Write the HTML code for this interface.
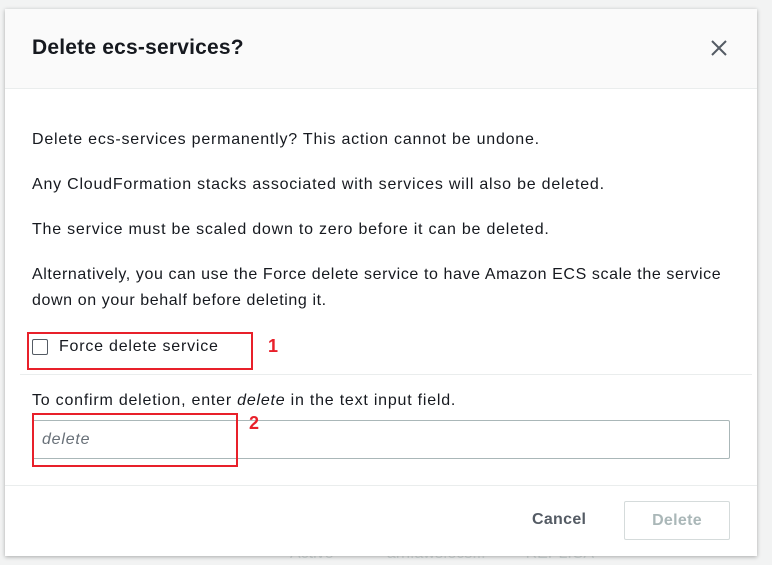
<!DOCTYPE html>
<html><head><style>
body{margin:0;width:772px;height:565px;background:#f2f3f3;position:relative;overflow:hidden;font-family:"Liberation Sans",sans-serif;color:#16191f}
.bg{position:absolute;color:#d5dbdb;font-size:16px}
.modal{position:absolute;left:5px;top:9px;width:752px;height:547px;background:#fff;box-shadow:0 1px 4px rgba(0,0,0,.3)}
.hdr{height:79px;background:#fafafa;border-bottom:1px solid #eaeded;position:relative}
.hdr h1{margin:0;position:absolute;left:27px;top:27px;font-size:21px;font-weight:bold;letter-spacing:0.2px}
.t{position:absolute;left:27px;font-size:16px;letter-spacing:0.78px;line-height:26px;white-space:nowrap}
.red{position:absolute;border:2px solid #e8202a}
.num{position:absolute;color:#e8202a;font-weight:bold;font-size:18px}
</style></head><body>
<div class="bg" style="left:290px;top:545px">Active &nbsp;&nbsp;&nbsp;&nbsp;&nbsp;&nbsp;&nbsp;&nbsp;&nbsp;&nbsp; arn:aws:ecs... &nbsp;&nbsp;&nbsp;&nbsp;&nbsp;&nbsp;&nbsp; REPLICA</div>
<div class="modal">
<div class="hdr"><h1>Delete ecs-services?</h1>
<svg style="position:absolute;left:706px;top:31px" width="16" height="16" viewBox="0 0 16 16"><path d="M1 1L15 15M15 1L1 15" stroke="#545b64" stroke-width="2"/></svg></div>
<div class="t" style="top:118px">Delete ecs-services permanently? This action cannot be undone.</div>
<div class="t" style="top:163px">Any CloudFormation stacks associated with services will also be deleted.</div>
<div class="t" style="top:208px">The service must be scaled down to zero before it can be deleted.</div>
<div class="t" style="top:253px;letter-spacing:0.6px">Alternatively, you can use the Force delete service to have Amazon ECS scale the service<br>down on your behalf before deleting it.</div>
<div style="position:absolute;left:27px;top:330px;width:14px;height:14px;border:1px solid #545b64;border-radius:2px"></div>
<div class="t" style="left:54px;top:325px">Force delete service</div>
<div style="position:absolute;left:15px;top:365px;width:732px;border-top:1px solid #eaeded"></div>
<div class="t" style="top:379px">To confirm deletion, enter <i>delete</i> in the text input field.</div>
<div style="position:absolute;left:27px;top:411px;width:696px;height:37px;border:1px solid #aab7b8;border-radius:2px"></div>
<div class="t" style="left:37px;top:418px;color:#687078;font-style:italic">delete</div>
<div style="position:absolute;left:0;top:476px;width:752px;border-top:1px solid #eaeded"></div>
<div class="t" style="left:527px;top:498px;font-weight:bold;color:#545b64;letter-spacing:0.3px">Cancel</div>
<div style="position:absolute;left:619px;top:492px;width:104px;height:37px;border:1px solid #d5dbdb;border-radius:2px;color:#aab7b8;font-weight:bold;font-size:16px;line-height:37px;text-align:center;letter-spacing:0.3px">Delete</div>
</div>
<div class="red" style="left:27px;top:332px;width:222px;height:34px"></div>
<div class="num" style="left:268px;top:336px">1</div>
<div class="red" style="left:32px;top:413px;width:202px;height:50px"></div>
<div class="num" style="left:249px;top:413px">2</div>
</body></html>
